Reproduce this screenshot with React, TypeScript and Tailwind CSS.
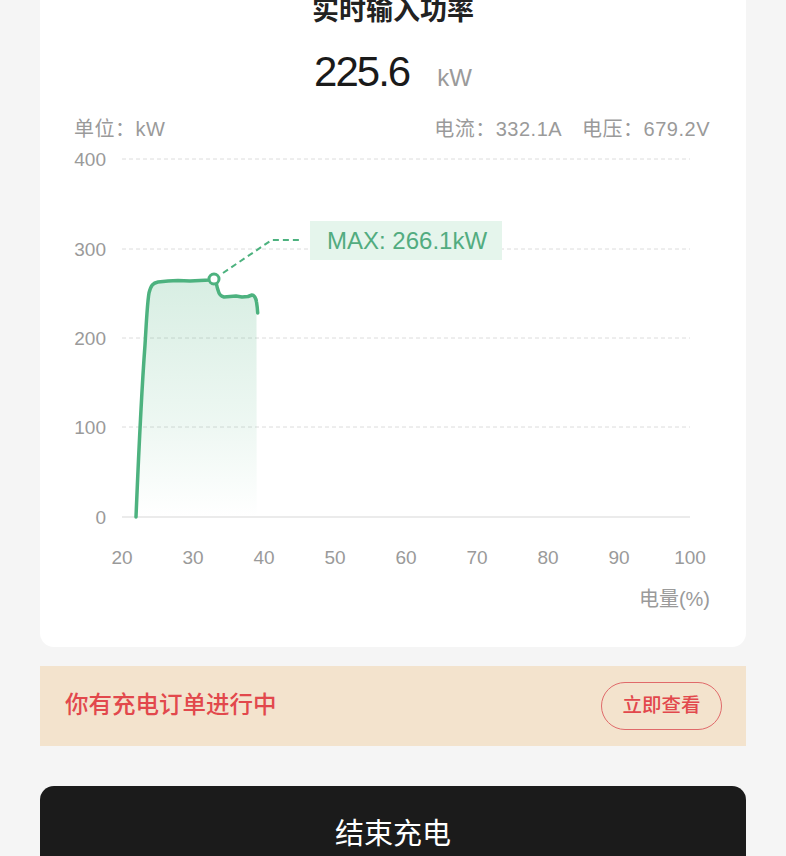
import React from "react";

const GREEN = "#4db27f";
const FONT = "Liberation Sans, Noto Sans CJK SC, sans-serif";

function Chart() {
  const yTicks = [
    { v: "400", y: 14 },
    { v: "300", y: 104 },
    { v: "200", y: 193 },
    { v: "100", y: 282 },
  ];
  const xLabels = ["20", "30", "40", "50", "60", "70", "80", "90", "100"];
  const line =
    "M96,372 C99,300 102,240 105,200 C106,185 107,160 109,148 C111,140 113,138 118,137 L128,136 L138,135.5 L150,136 L160,135.5 L170,135 L174,134.5 C177,136 176,140 178,145 C179,149 180,151 184,152 L190,151.5 L196,151 L202,152 L208,151.5 L212,150 C214,150 216,153 216.5,157 C217,160 217.5,164 217.7,168";
  const fill =
    "M96,372 C99,300 102,240 105,200 C106,185 107,160 109,148 C111,140 113,138 118,137 L128,136 L138,135.5 L150,136 L160,135.5 L170,135 L174,134.5 C177,136 176,140 178,145 C179,149 180,151 184,152 L190,151.5 L196,151 L202,152 L208,151.5 L212,150 C214,150 216,153 216.5,157 L216.7,372 Z";
  return (
    <svg
      width="706"
      height="502"
      viewBox="0 0 706 502"
      className="block mt-[6px]"
      fontFamily={FONT}
    >
      <defs>
        <linearGradient id="g" x1="0" y1="0" x2="0" y2="1">
          <stop offset="0" stopColor={GREEN} stopOpacity="0.22" />
          <stop offset="0.6" stopColor={GREEN} stopOpacity="0.1" />
          <stop offset="1" stopColor={GREEN} stopOpacity="0" />
        </linearGradient>
      </defs>
      {yTicks.map((t) => (
        <g key={t.v}>
          <text x="66" y={t.y} textAnchor="end" dominantBaseline="central" fontSize="19" fill="#9a9a9a">
            {t.v}
          </text>
          <line x1="82" x2="650" y1={t.y} y2={t.y} stroke="#dcdcdc" strokeWidth="1" strokeDasharray="4 3" />
        </g>
      ))}
      <text x="66" y="372" textAnchor="end" dominantBaseline="central" fontSize="19" fill="#9a9a9a">
        0
      </text>
      <line x1="82" x2="650" y1="372" y2="372" stroke="#e4e4e4" strokeWidth="1.5" />
      {xLabels.map((l, i) => (
        <text key={l} x={82 + 71 * i} y="412" textAnchor="middle" dominantBaseline="central" fontSize="19" fill="#9a9a9a">
          {l}
        </text>
      ))}
      <text x="670" y="454" textAnchor="end" dominantBaseline="central" fontSize="20" fill="#9a9a9a">
        电量(%)
      </text>

      <path d={fill} fill="url(#g)" />
      <path d={line} fill="none" stroke={GREEN} strokeWidth="3.5" strokeLinecap="round" strokeLinejoin="round" />
      <path d="M183,128 L231.7,95 L260,95" fill="none" stroke={GREEN} strokeWidth="2" strokeDasharray="6 4" />
      <circle cx="174" cy="134" r="5" fill="#fff" stroke={GREEN} strokeWidth="3" />

      <rect x="270" y="76" width="192" height="39" fill="#e5f5ec" />
      <text x="287" y="103.5" fontSize="24" fill="#52ac80">
        MAX: 266.1kW
      </text>
    </svg>
  );
}

export default function App() {
  return (
    <div className="h-[856px] overflow-hidden bg-[#f5f5f5] px-[40px] font-['Liberation_Sans','Noto_Sans_CJK_SC',sans-serif]">
      <div className="bg-white rounded-b-[14px] overflow-hidden">
        <h1 className="-mt-[2px] h-[27px] text-center text-[27px] leading-[27px] font-semibold text-[#222]">
          实时输入功率
        </h1>
        <div className="mt-[26px] flex h-[42px] items-baseline justify-center leading-none">
          <span className="text-[42px] leading-none tracking-[-2px] text-[#1a1a1a]">225.6</span>
          <span className="ml-[28px] text-[24px] leading-none text-[#9a9a9a]">kW</span>
        </div>
        <div className="mt-[27px] flex h-[19px] items-center justify-between pl-[34px] pr-[36px] text-[20px] leading-[19px] tracking-[0.5px] text-[#9a9a9a]">
          <span>单位：kW</span>
          <span className="flex gap-[20px]">
            <span>电流：332.1A</span>
            <span>电压：679.2V</span>
          </span>
        </div>
        <Chart />
      </div>

      <div className="mt-[19px] flex h-[80px] items-center justify-between bg-[#f3e3cd] pl-[25px] pr-[24px]">
        <span className="text-[23.5px] font-medium text-[#e2484c]">你有充电订单进行中</span>
        <button className="flex h-[48px] w-[121px] items-center justify-center rounded-full border border-[#e06a6a] text-[19.5px] font-medium text-[#e2484c]">
          立即查看
        </button>
      </div>

      <div className="mt-[40px] flex h-[98px] items-center justify-center rounded-[14px] bg-[#1b1b1b] text-[29px] text-white">
        结束充电
      </div>
    </div>
  );
}
